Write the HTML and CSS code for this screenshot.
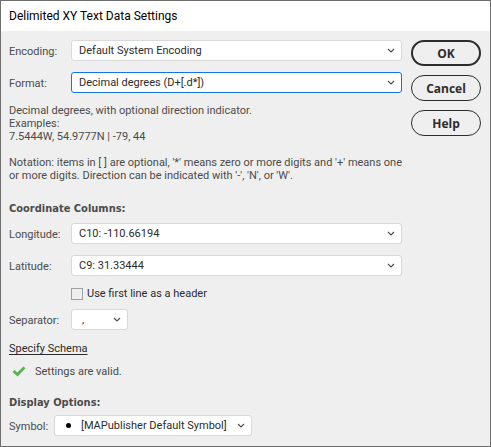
FILE: index.html
```html
<!DOCTYPE html>
<html lang="en">
<head>
    <meta charset="UTF-8">
    <meta name="viewport" content="width=device-width, initial-scale=1.0">
    <title>Delimited XY Text Data Settings</title>
    <link rel="stylesheet" href="styles.css">
</head>
<body>
    <form class="dialog">
        <h1 class="title">Delimited XY Text Data Settings</h1>
        <div class="content">
            <div class="settings">
                <div class="row">
                    <label for="encoding">Encoding:</label>
                    <div class="dropdown">
                        <select id="encoding">
                            <option>Default System Encoding</option>
                        </select>
                        <svg class="chevron" viewBox="0 0 8 5"><path d="M1 1l3 3 3-3"/></svg>
                    </div>
                </div>
                <div class="row">
                    <label for="format">Format:</label>
                    <div class="dropdown">
                        <select id="format" class="active">
                            <option>Decimal degrees (D+[.d*])</option>
                        </select>
                        <svg class="chevron" viewBox="0 0 8 5"><path d="M1 1l3 3 3-3"/></svg>
                    </div>
                </div>
                <div class="description">
                    <p>Decimal degrees, with optional direction indicator.<br>
                    Examples:<br>
                    7.5444W, 54.9777N | -79, 44</p>
                    <p>Notation: items in [ ] are optional, '*' means zero or more digits and '+' means one<br>
                    or more digits. Direction can be indicated with '-', 'N', or 'W'.</p>
                </div>
                <h2>Coordinate Columns:</h2>
                <div class="row">
                    <label for="longitude">Longitude:</label>
                    <div class="dropdown">
                        <select id="longitude">
                            <option>C10: -110.66194</option>
                        </select>
                        <svg class="chevron" viewBox="0 0 8 5"><path d="M1 1l3 3 3-3"/></svg>
                    </div>
                </div>
                <div class="row">
                    <label for="latitude">Latitude:</label>
                    <div class="dropdown">
                        <select id="latitude">
                            <option>C9: 31.33444</option>
                        </select>
                        <svg class="chevron" viewBox="0 0 8 5"><path d="M1 1l3 3 3-3"/></svg>
                    </div>
                </div>
                <div class="check-row">
                    <input type="checkbox" id="header">
                    <label for="header">Use first line as a header</label>
                </div>
                <div class="row">
                    <label for="separator">Separator:</label>
                    <div class="dropdown small">
                        <select id="separator">
                            <option>,</option>
                        </select>
                        <svg class="chevron" viewBox="0 0 8 5"><path d="M1 1l3 3 3-3"/></svg>
                    </div>
                </div>
                <a class="schema" href="#">Specify Schema</a>
                <div class="status">
                    <svg class="check" viewBox="0 0 14 11"><path d="M0.500 6l2-2 2.800 2.600L11.500 0.600 13.500 2.200 5.600 10.400z"/></svg>
                    <span>Settings are valid.</span>
                </div>
                <h2>Display Options:</h2>
                <div class="row symbol-row">
                    <label for="symbol">Symbol:</label>
                    <div class="dropdown symbol">
                        <select id="symbol">
                            <option>[MAPublisher Default Symbol]</option>
                        </select>
                        <span class="dot"></span>
                        <svg class="chevron" viewBox="0 0 8 5"><path d="M1 1l3 3 3-3"/></svg>
                    </div>
                </div>
            </div>
            <div class="buttons">
                <button type="submit" class="primary">OK</button>
                <button type="button">Cancel</button>
                <button type="button">Help</button>
            </div>
        </div>
    </form>
</body>
</html>
```
FILE: styles.css
```css
* {
    box-sizing: border-box;
}

body {
    margin: 0;
    background-color: #efefef;
    font-family: Roboto, Tahoma, sans-serif;
    font-size: 11px;
    line-height: 13px;
    color: #4b4b4b;
}

.dialog {
    min-height: 100vh;
    border: 1px solid #6e6e6e;
}

.title {
    margin: 0;
    padding: 0 8px;
    background-color: #ffffff;
    font-size: 12px;
    font-weight: normal;
    line-height: 30px;
    color: #000000;
}

.content {
    display: flex;
    gap: 9px;
    padding: 9px 9px 10px 8px;
}

.settings {
    flex: 1;
    min-width: 0;
}

.row {
    display: flex;
    align-items: center;
    margin-bottom: 11px;
}

.row label {
    flex: none;
    width: 62px;
    padding-top: 2px;
}

.dropdown {
    position: relative;
    flex: 1;
}

.dropdown.small {
    flex: none;
    width: 57px;
}

.dropdown.symbol {
    flex: none;
    width: 198px;
}

select {
    display: block;
    appearance: none;
    width: 100%;
    height: 21px;
    padding: 0 20px 0 7px;
    border: 1px solid #d9d9d9;
    border-radius: 3px;
    background-color: #ffffff;
    font: inherit;
    color: #2c2c2c;
}

select.active {
    border-color: #1473e6;
}

.small select {
    padding-left: 10px;
}

.symbol select {
    padding-left: 26px;
}

.chevron {
    position: absolute;
    top: 8px;
    right: 7px;
    width: 8px;
    height: 5px;
    fill: none;
    stroke: #505050;
    stroke-width: 1.2;
    pointer-events: none;
}

.dot {
    position: absolute;
    top: 8px;
    left: 12px;
    width: 5px;
    height: 5px;
    border-radius: 50%;
    background-color: #000000;
    pointer-events: none;
}

.description p {
    margin: 0 0 13px;
    white-space: nowrap;
}

h2 {
    margin: 0;
    font-family: "DejaVu Sans Condensed", Tahoma, sans-serif;
    font-size: 11px;
    line-height: 13px;
}

.description + h2 {
    margin: 20px 0 8px;
}

.check-row {
    display: flex;
    align-items: center;
    gap: 4px;
    margin: 0 0 9px 62px;
    color: #2c2c2c;
}

.check-row input {
    appearance: none;
    width: 12px;
    height: 12px;
    margin: 0;
    border: 1px solid #a0a0a0;
}

.schema {
    display: table;
    margin-top: 12px;
    text-underline-offset: 2px;
    color: #2c2c2c;
}

.status {
    display: flex;
    align-items: center;
    gap: 9px;
    margin: 10px 0 18px 3px;
}

.check {
    width: 14px;
    height: 11px;
    fill: #5cb250;
}

.symbol-row {
    margin: 6px 0 0;
}

.symbol-row label {
    width: 45px;
}

.buttons {
    display: flex;
    flex-direction: column;
    gap: 9px;
    width: 70px;
}

button {
    height: 26px;
    padding: 0;
    border: 1px solid #2c2c2c;
    border-radius: 13px;
    background-color: transparent;
    font-family: "Open Sans", "Segoe UI", sans-serif;
    font-size: 12px;
    font-weight: bold;
    color: #2c2c2c;
}

button.primary {
    border-width: 2px;
}
```
